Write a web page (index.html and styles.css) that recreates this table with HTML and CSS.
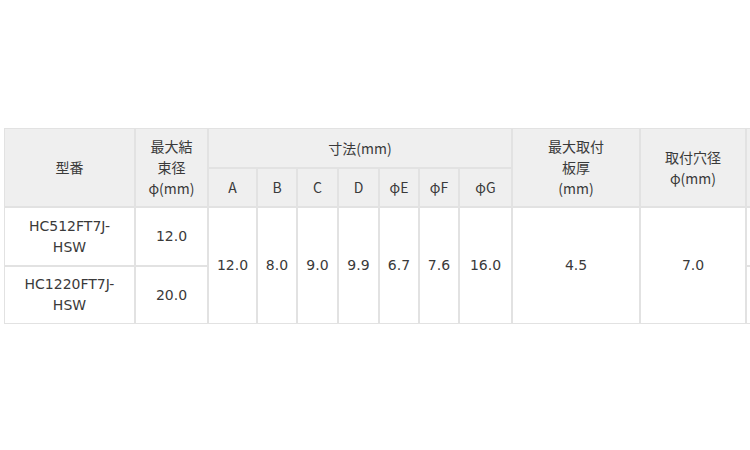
FILE: index.html
```html
<!DOCTYPE html>
<html lang="ja">
<head>
<meta charset="utf-8">
<link rel="stylesheet" href="styles.css">
</head>
<body>
<div class="page">
<table class="spec">
<colgroup>
<col class="c-model"><col class="c-bundle"><col class="c-a"><col class="c-b"><col class="c-c"><col class="c-d"><col class="c-e"><col class="c-f"><col class="c-g"><col class="c-plate"><col class="c-hole"><col class="c-more">
</colgroup>
<thead>
<tr class="h1">
<th rowspan="2">型番</th>
<th rowspan="2">最大結<br>束径<br>φ(mm)</th>
<th colspan="7">寸法(mm)</th>
<th rowspan="2">最大取付<br>板厚<br>(mm)</th>
<th rowspan="2">取付穴径<br>φ(mm)</th>
<th rowspan="2"></th>
</tr>
<tr class="h2">
<th>A</th><th>B</th><th>C</th><th>D</th><th>φE</th><th>φF</th><th>φG</th>
</tr>
</thead>
<tbody>
<tr class="r1">
<td>HC512FT7J-<br>HSW</td>
<td>12.0</td>
<td rowspan="2">12.0</td>
<td rowspan="2">8.0</td>
<td rowspan="2">9.0</td>
<td rowspan="2">9.9</td>
<td rowspan="2">6.7</td>
<td rowspan="2">7.6</td>
<td rowspan="2">16.0</td>
<td rowspan="2">4.5</td>
<td rowspan="2">7.0</td>
<td></td>
</tr>
<tr class="r2">
<td>HC1220FT7J-<br>HSW</td>
<td>20.0</td>
<td></td>
</tr>
</tbody>
</table>
</div>
</body>
</html>
```

FILE: styles.css
```css
html, body {
  margin: 0;
  padding: 0;
  background: #fff;
  overflow: hidden;
}
.page {
  width: 750px;
  height: 450px;
  overflow: hidden;
  padding: 128px 0 0 4px;
  box-sizing: border-box;
}
.spec {
  table-layout: fixed;
  width: 842px;
  border-collapse: separate;
  border-spacing: 0;
  font-family: "DejaVu Sans", "Noto Sans CJK JP", sans-serif;
  font-size: 14px;
  line-height: 21px;
  color: #3a3a3a;
}
.spec th, .spec td {
  box-sizing: border-box;
  border: 1px solid #e2e2e2;
  padding: 7px 4px;
  text-align: center;
  vertical-align: middle;
  font-weight: normal;
}
.spec th {
  background: #efefef;
  font-family: "Noto Sans CJK JP", "DejaVu Sans", sans-serif;
}
.spec td {
  background: #fff;
}
.h1 { height: 40px; }
.h2 { height: 39px; }
.r1 { height: 59px; }
.r2 { height: 58px; }
.c-model { width: 131px; }
.c-bundle { width: 73px; }
.c-a { width: 49px; }
.c-b { width: 40px; }
.c-c { width: 41px; }
.c-d { width: 41px; }
.c-e { width: 40px; }
.c-f { width: 40px; }
.c-g { width: 53px; }
.c-plate { width: 128px; }
.c-hole { width: 106px; }
.c-more { width: 100px; }
```
